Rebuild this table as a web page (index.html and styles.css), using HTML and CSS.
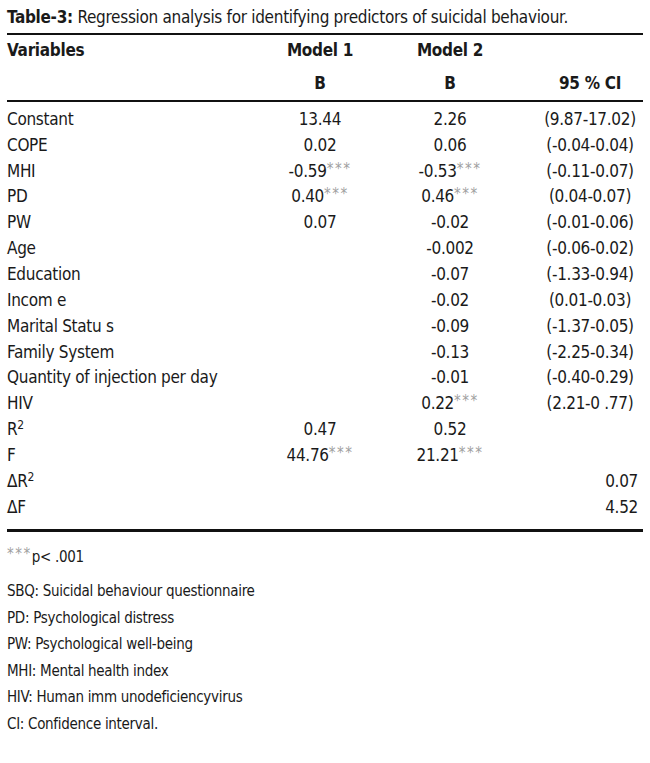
FILE: index.html
```html
<!DOCTYPE html>
<html>
<head>
<meta charset="utf-8">
<link rel="stylesheet" href="styles.css">
</head>
<body>
<div class="page">
  <p class="title"><b>Table-3:</b> Regression analysis for identifying predictors of suicidal behaviour.</p>
  <table class="reg">
    <thead>
      <tr class="h1">
        <th class="var">Variables</th>
        <th class="num">Model 1</th>
        <th class="num">Model 2</th>
        <th class="ci"></th>
      </tr>
      <tr class="h2">
        <th class="var"></th>
        <th class="num">B</th>
        <th class="num">B</th>
        <th class="ci">95 % CI</th>
      </tr>
    </thead>
    <tbody>
      <tr class="first"><td class="var">Constant</td><td class="num">13.44</td><td class="num">2.26</td><td class="ci">(9.87-17.02)</td></tr>
      <tr><td class="var">COPE</td><td class="num">0.02</td><td class="num">0.06</td><td class="ci">(-0.04-0.04)</td></tr>
      <tr><td class="var">MHI</td><td class="num">-0.59<sup class="st">***</sup></td><td class="num">-0.53<sup class="st">***</sup></td><td class="ci">(-0.11-0.07)</td></tr>
      <tr><td class="var">PD</td><td class="num">0.40<sup class="st">***</sup></td><td class="num">0.46<sup class="st">***</sup></td><td class="ci">(0.04-0.07)</td></tr>
      <tr><td class="var">PW</td><td class="num">0.07</td><td class="num">-0.02</td><td class="ci">(-0.01-0.06)</td></tr>
      <tr><td class="var">Age</td><td class="num"></td><td class="num">-0.002</td><td class="ci">(-0.06-0.02)</td></tr>
      <tr><td class="var">Education</td><td class="num"></td><td class="num">-0.07</td><td class="ci">(-1.33-0.94)</td></tr>
      <tr><td class="var">Incom e</td><td class="num"></td><td class="num">-0.02</td><td class="ci">(0.01-0.03)</td></tr>
      <tr><td class="var">Marital Statu s</td><td class="num"></td><td class="num">-0.09</td><td class="ci">(-1.37-0.05)</td></tr>
      <tr><td class="var">Family System</td><td class="num"></td><td class="num">-0.13</td><td class="ci">(-2.25-0.34)</td></tr>
      <tr><td class="var">Quantity of injection per day</td><td class="num"></td><td class="num">-0.01</td><td class="ci">(-0.40-0.29)</td></tr>
      <tr><td class="var">HIV</td><td class="num"></td><td class="num">0.22<sup class="st">***</sup></td><td class="ci">(2.21-0 .77)</td></tr>
      <tr><td class="var">R<sup class="sq">2</sup></td><td class="num">0.47</td><td class="num">0.52</td><td class="ci"></td></tr>
      <tr><td class="var">F</td><td class="num">44.76<sup class="st">***</sup></td><td class="num">21.21<sup class="st">***</sup></td><td class="ci"></td></tr>
      <tr><td class="var">ΔR<sup class="sq">2</sup></td><td class="num"></td><td class="num"></td><td class="ci right">0.07</td></tr>
      <tr class="last"><td class="var">ΔF</td><td class="num"></td><td class="num"></td><td class="ci right">4.52</td></tr>
    </tbody>
  </table>
  <div class="notes">
    <p class="pval"><sup class="st">***</sup>p&lt; .001</p>
    <p>SBQ: Suicidal behaviour questionnaire</p>
    <p>PD: Psychological distress</p>
    <p>PW: Psychological well-being</p>
    <p>MHI: Mental health index</p>
    <p>HIV: Human imm unodeficiencyvirus</p>
    <p>CI: Confidence interval.</p>
  </div>
</div>
</body>
</html>
```
FILE: styles.css
```css
html, body {
  margin: 0;
  padding: 0;
  background: #ffffff;
}
body {
  font-family: "DejaVu Sans Condensed", "Liberation Sans Narrow", "Liberation Sans", sans-serif;
  color: #1a1a1a;
}
.page {
  padding: 6px 7px 0 7px;
  width: 636px;
}
.title {
  margin: 0;
  font-size: 17px;
  letter-spacing: -0.3px;
  line-height: 22px;
  padding-bottom: 5px;
}
.title b {
  font-weight: bold;
}
.reg {
  width: 636px;
  border-collapse: collapse;
  font-size: 17px;
  letter-spacing: -0.3px;
  border-top: 2px solid #111;
  border-bottom: 3px solid #111;
}
.reg th, .reg td {
  padding: 0;
  font-weight: normal;
}
.reg th {
  font-weight: bold;
}
.reg thead tr.h1 th {
  height: 30px;
  vertical-align: middle;
}
.reg thead tr.h2 th {
  height: 35px;
  border-bottom: 2px solid #111;
  vertical-align: middle;
}
.reg td {
  height: 25.85px;
  vertical-align: middle;
}
.reg tr.first td {
  padding-top: 4px;
}
.reg tr.last td {
  padding-bottom: 9px;
}
.var {
  width: 248px;
  text-align: left;
}
.num {
  width: 130px;
  text-align: center;
}
.ci {
  text-align: center;
  padding-left: 22px !important;
}
.ci.right {
  text-align: right;
  padding-right: 5px !important;
}
.st {
  color: #a0a0a0;
  font-size: 15px;
  font-weight: normal;
  vertical-align: 3px;
  line-height: 0;
  letter-spacing: 1.5px;
}
.sq {
  font-size: 12px;
  vertical-align: 6px;
  line-height: 0;
}
.notes {
  padding-top: 12px;
  font-size: 15px;
  letter-spacing: -0.3px;
}
.notes p {
  margin: 0;
  line-height: 26.5px;
}
.notes p.pval {
  padding-bottom: 8px;
}
```
